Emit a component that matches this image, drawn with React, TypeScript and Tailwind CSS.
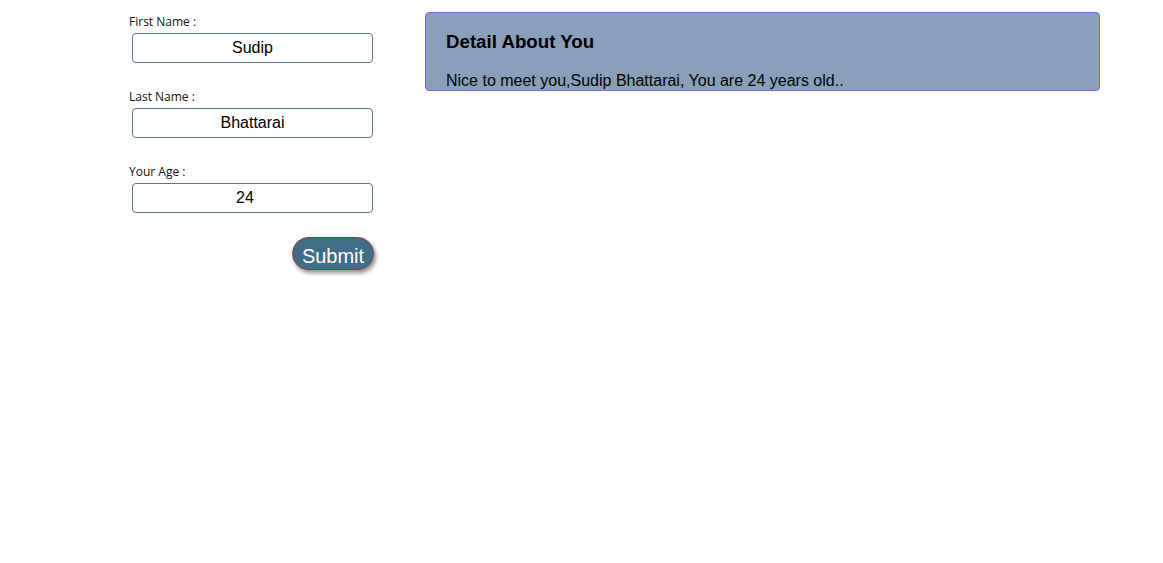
import { useState } from "react";

const fields = [
  { id: "first", label: "First Name :", type: "text" },
  { id: "last", label: "Last Name :", type: "text" },
  { id: "age", label: "Your Age :", type: "number" },
];

export default function App() {
  const [values, setValues] = useState<Record<string, string>>({
    first: "Sudip",
    last: "Bhattarai",
    age: "24",
  });

  return (
    <div className="flex items-start bg-white min-h-[563px] font-['Liberation_Sans',Arial,sans-serif] text-black">
      {/* Form column */}
      <form
        className="ml-[129px] mt-[13px] w-[245px] flex flex-col"
        onSubmit={(e) => e.preventDefault()}
      >
        {fields.map((f) => (
          <div key={f.id} className="flex flex-col mb-[25px]">
            <label
              htmlFor={f.id}
              className="font-['Open_Sans','Noto_Sans',sans-serif] text-[12px] leading-[18px] text-[#111]"
            >
              {f.label}
            </label>
            <input
              id={f.id}
              type={f.type}
              value={values[f.id]}
              onChange={(e) => setValues({ ...values, [f.id]: e.target.value })}
              className="mt-[2px] ml-[3px] w-[241px] h-[30px] rounded-[4px] border border-[#607587] bg-white text-center text-[16px] outline-none font-['Liberation_Sans',Arial,sans-serif]"
            />
          </div>
        ))}
        <div className="flex justify-end -mt-[1px]">
          <button
            type="submit"
            className="w-[82px] h-[33px] rounded-full border border-[#8c3a44] bg-[#426d88] pt-[5px] text-white text-[20px] leading-[20px] shadow-[2px_3px_4px_rgba(0,0,0,0.45)]"
          >
            Submit
          </button>
        </div>
      </form>

      {/* Detail panel */}
      <div className="ml-[51px] mt-[12px] w-[675px] h-[79px] overflow-hidden rounded-[4px] border border-[#7a66d4] bg-[#8aa0ba] px-5 pt-[18px]">
        <h3 className="text-[18.7px] leading-[22px] font-bold">Detail About You</h3>
        <p className="mt-[18px] text-[16px] leading-[20px]">
          Nice to meet you,{values.first} {values.last}, You are {values.age} years old..
        </p>
      </div>
    </div>
  );
}
